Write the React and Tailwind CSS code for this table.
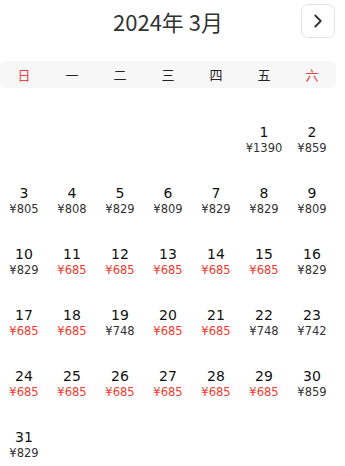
import { ChevronRight } from "lucide-react";

const weekdays = ["日", "一", "二", "三", "四", "五", "六"];

// prices for march, low = red
const prices = {
  1: 1390, 2: 859, 3: 805, 4: 808, 5: 829, 6: 809, 7: 829, 8: 829, 9: 809,
  10: 829, 11: 685, 12: 685, 13: 685, 14: 685, 15: 685, 16: 829,
  17: 685, 18: 685, 19: 748, 20: 685, 21: 685, 22: 748, 23: 742,
  24: 685, 25: 685, 26: 685, 27: 685, 28: 685, 29: 685, 30: 859, 31: 829,
};

export default function App() {
  const offset = 5; // march 1 2024 is a friday
  const cells = [
    ...Array.from({ length: offset }, () => null),
    ...Array.from({ length: 31 }, (_, i) => i + 1),
  ];

  return (
    <div
      className="h-[466px] w-[345px] overflow-hidden bg-white pr-[9px]"
      style={{ fontFamily: '"DejaVu Sans", "Noto Sans CJK SC", sans-serif' }}
    >
      {/* header */}
      <div className="relative flex h-[42px] items-center justify-center">
        <h1
          className="text-[22px] leading-none text-[#333]"
          style={{ fontFamily: '"Noto Sans CJK SC", sans-serif' }}
        >
          2024年 3月
        </h1>
        <button className="absolute right-[1px] top-[4px] flex h-[34px] w-[34px] items-center justify-center rounded-[7px] border border-[#e3e3e3] bg-white text-[#333]">
          <ChevronRight size={22} strokeWidth={2} />
        </button>
      </div>

      {/* weekday bar */}
      <div className="mt-[19px] grid h-[27px] grid-cols-7 items-center rounded-[5px] bg-[#f7f7f7]">
        {weekdays.map((w, i) => (
          <span
            key={w}
            className={`text-center text-[13px] ${
              i === 0 || i === 6 ? "text-[#e64340]" : "text-[#222]"
            }`}
            style={{ fontFamily: '"Noto Sans CJK SC", sans-serif' }}
          >
            {w}
          </span>
        ))}
      </div>

      {/* days */}
      <div className="mt-[34px] grid grid-cols-7">
        {cells.map((d, i) => (
          <div key={i} className="flex h-[61px] flex-col items-center pt-[2px]">
            {d && (
              <>
                <span className="text-[14px] leading-[17px] text-[#111]">{d}</span>
                <span
                  className={`text-[11.5px] leading-[15px] ${
                    prices[d] === 685 ? "text-[#ee3b2e]" : "text-[#333]"
                  }`}
                >
                  ¥{prices[d]}
                </span>
              </>
            )}
          </div>
        ))}
      </div>
    </div>
  );
}
